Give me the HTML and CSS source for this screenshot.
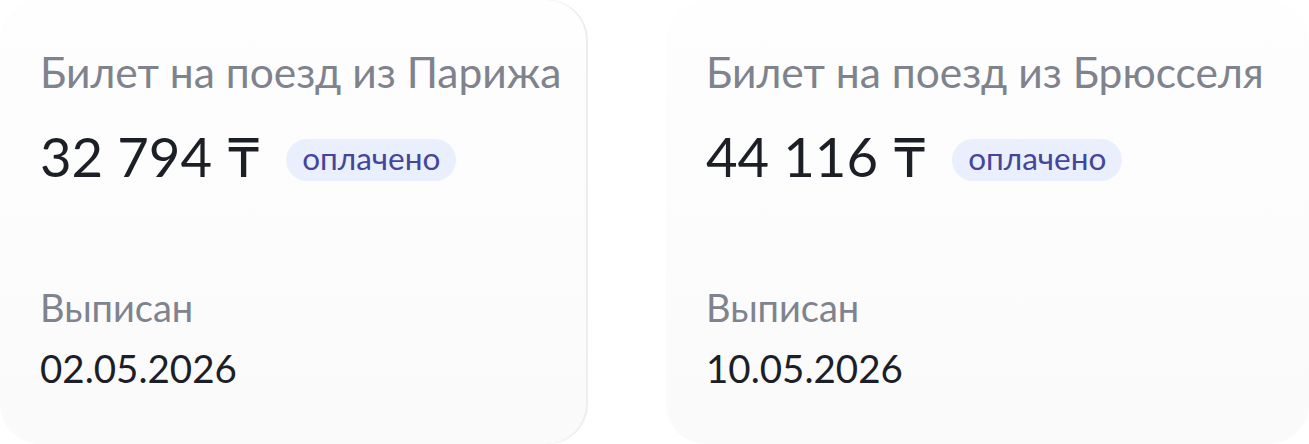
FILE: index.html
```html
<!DOCTYPE html>
<html lang="ru">
<head>
<meta charset="utf-8">
<title>Билеты</title>
<link rel="stylesheet" href="styles.css">
</head>
<body>
  <div class="tickets">
    <article class="ticket ticket--first">
      <div class="ticket__title">Билет на поезд из Парижа</div>
      <div class="ticket__price-row">
        <span class="ticket__price">32 794 ₸</span>
        <span class="badge">оплачено</span>
      </div>
      <div class="ticket__meta">
        <div class="ticket__label">Выписан</div>
        <div class="ticket__date">02.05.2026</div>
      </div>
    </article>
    <article class="ticket ticket--second">
      <div class="ticket__title">Билет на поезд из Брюсселя</div>
      <div class="ticket__price-row">
        <span class="ticket__price">44 116 ₸</span>
        <span class="badge">оплачено</span>
      </div>
      <div class="ticket__meta">
        <div class="ticket__label">Выписан</div>
        <div class="ticket__date">10.05.2026</div>
      </div>
    </article>
  </div>
</body>
</html>
```

FILE: styles.css
```css
html, body {
  margin: 0;
  padding: 0;
  background: #ffffff;
}

body {
  font-family: Lato, "Noto Sans", "Liberation Sans", sans-serif;
  width: 1309px;
  height: 444px;
  overflow: hidden;
}

.tickets {
  display: flex;
  gap: 78px;
  height: 444px;
}

.ticket {
  box-sizing: border-box;
  height: 444px;
  border-radius: 40px;
  background: linear-gradient(180deg, #fefefe 0%, #fcfcfd 50%, #fafafb 100%);
  padding: 46px 0 53px 40px;
  display: flex;
  flex-direction: column;
}

.ticket--first {
  width: 588px;
  box-shadow: inset -2px 0 0 #ececf2;
}

.ticket--second {
  width: 643px;
}

.ticket__title {
  font-size: 42.5px;
  line-height: 1.2;
  color: #7f838e;
  white-space: nowrap;
}

.ticket__price-row {
  margin-top: 27px;
  display: flex;
  align-items: center;
  gap: 25px;
}

.ticket__price {
  font-size: 54.5px;
  line-height: 1.2;
  color: #1c2026;
  white-space: nowrap;
}

.badge {
  height: 42px;
  box-sizing: border-box;
  padding: 0 16px 4px;
  border-radius: 21px;
  background: #e9effc;
  color: #45459b;
  font-size: 31.5px;
  line-height: 38px;
  margin-top: 6px;
}

.ticket__meta {
  margin-top: auto;
  display: flex;
  flex-direction: column;
  gap: 14px;
}

.ticket__label {
  font-size: 38px;
  line-height: 1.2;
  color: #7f838e;
}

.ticket__date {
  font-size: 38.5px;
  line-height: 1.2;
  color: #1c2026;
}
```
